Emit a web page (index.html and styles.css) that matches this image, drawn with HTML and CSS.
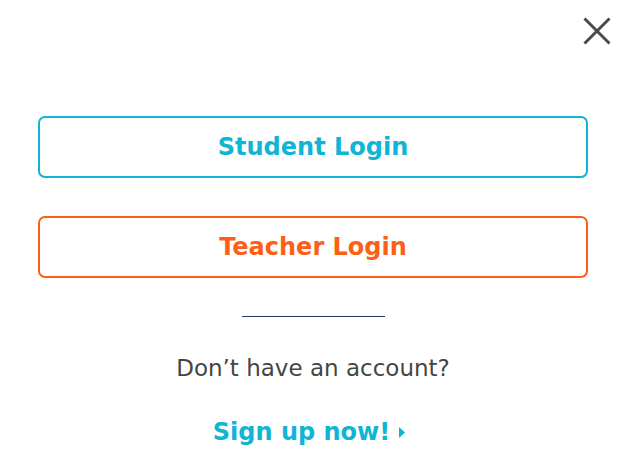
FILE: index.html
```html
<!DOCTYPE html>
<html>
<head>
    <meta charset="UTF-8">
    <title>Login</title>
    <link rel="stylesheet" href="styles.css">
</head>
<body>
    <div class="modal">
        <div class="top">
            <button class="close" aria-label="Close">
                <svg width="28" height="28" viewBox="0 0 28 28">
                    <path d="M1.5 1.5 L26.5 26.5 M26.5 1.5 L1.5 26.5" stroke="#4a4a4a" stroke-width="3" fill="none"/>
                </svg>
            </button>
        </div>
        <div class="logins">
            <a href="#" class="login student">Student Login</a>
            <a href="#" class="login teacher">Teacher Login</a>
        </div>
        <div class="divider"></div>
        <p class="ask">Don’t have an account?</p>
        <a href="#" class="signup">Sign up now!
            <svg width="6" height="11" viewBox="0 0 6 11"><path d="M0 0 L6 5.5 L0 11 Z" fill="#10b4d4"/></svg>
        </a>
    </div>
</body>
</html>
```

FILE: styles.css
```css
* {
    margin: 0;
    padding: 0;
    box-sizing: border-box;
}

body {
    background-color: #fff;
    font-family: "DejaVu Sans", sans-serif;
}

.modal {
    width: 630px;
    height: 473px;
    padding-right: 4px;
    display: flex;
    flex-direction: column;
    align-items: center;
}

.top {
    align-self: stretch;
    display: flex;
    justify-content: flex-end;
    padding: 17px 15px 0 0;
    height: 116px;
}

.close {
    background: none;
    border: none;
    width: 28px;
    height: 28px;
    cursor: pointer;
}

.close svg {
    display: block;
}

.logins {
    display: flex;
    flex-direction: column;
    gap: 38px;
    width: 550px;
}

.login {
    display: flex;
    align-items: center;
    justify-content: center;
    height: 62px;
    border: 2px solid;
    border-radius: 7px;
    font-size: 24px;
    font-weight: bold;
    text-decoration: none;
}

.student {
    color: #10b4d4;
    border-color: #10b4d4;
}

.teacher {
    color: #fd5f16;
    border-color: #fd5f16;
}

.divider {
    width: 143px;
    height: 1px;
    background-color: #1d3769;
    margin-top: 38px;
}

.ask {
    margin-top: 37px;
    font-size: 23px;
    line-height: 28px;
    color: #454545;
}

.signup {
    margin: 36px 8px 0 0;
    display: flex;
    align-items: center;
    gap: 9px;
    font-size: 24px;
    line-height: 28px;
    font-weight: bold;
    color: #10b4d4;
    text-decoration: none;
}
```
